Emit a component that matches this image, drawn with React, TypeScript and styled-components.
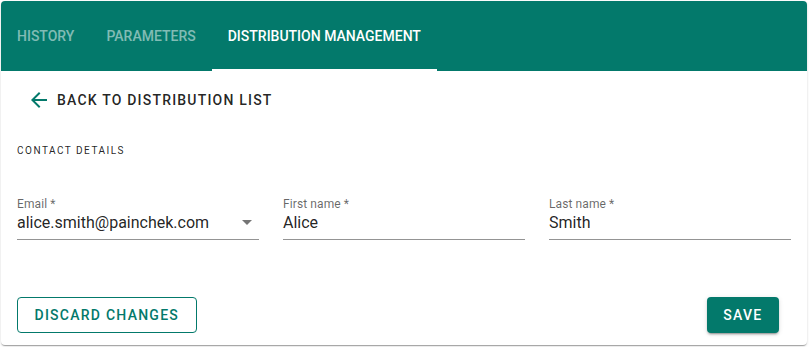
import React from "react";
import styled, { createGlobalStyle } from "styled-components";

const Global = createGlobalStyle`
  html, body { margin: 0; padding: 0; background: #fff; }
  body { font-family: Roboto, "Liberation Sans", Arial, sans-serif; -webkit-font-smoothing: antialiased; }
  * { box-sizing: border-box; }
`;

const Page = styled.div`
  padding: 1px 2px 2px 1px;
  width: 809px;
`;

const Card = styled.div`
  width: 806px;
  height: 344px;
  background: #fff;
  border-radius: 4px;
  overflow: hidden;
  box-shadow: 0px 2px 1px -1px rgba(0,0,0,0.2), 0px 1px 1px 0px rgba(0,0,0,0.14), 0px 1px 3px 0px rgba(0,0,0,0.12);
  display: flex;
  flex-direction: column;
`;

const TabBar = styled.div`
  height: 70px;
  background: #03796b;
  display: flex;
  align-items: stretch;
`;

const Tab = styled.div<{ $active?: boolean }>`
  position: relative;
  display: flex;
  align-items: center;
  padding: 0 16px 1px 16px;
  font-size: 14px;
  font-weight: 500;
  letter-spacing: 0;
  text-transform: uppercase;
  color: ${(p) => (p.$active ? "#ffffff" : "rgba(255,255,255,0.5)")};
  &::after {
    content: "";
    position: absolute;
    left: 0;
    right: 0;
    bottom: 0;
    height: 2px;
    background: ${(p) => (p.$active ? "#ffffff" : "transparent")};
  }
`;

const Body = styled.div`
  flex: 1;
  display: flex;
  flex-direction: column;
  padding: 0 16px 12px 16px;
`;

const BackButton = styled.button`
  align-self: flex-start;
  margin-top: 11px;
  margin-left: 2px;
  height: 36px;
  display: flex;
  align-items: center;
  gap: 6px;
  padding: 0 8px;
  border: none;
  background: transparent;
  font-family: inherit;
  font-size: 14px;
  font-weight: 500;
  letter-spacing: 1.2px;
  color: rgba(0,0,0,0.87);
  text-transform: uppercase;
`;

const SectionTitle = styled.div`
  margin-top: 26px;
  font-size: 10px;
  font-weight: 400;
  letter-spacing: 1.5px;
  text-transform: uppercase;
  color: rgba(0,0,0,0.87);
  line-height: 14px;
`;

const FieldRow = styled.div`
  margin-top: 39px;
  display: grid;
  grid-template-columns: repeat(3, 242px);
  column-gap: 24px;
`;

const Field = styled.div`
  display: flex;
  flex-direction: column;
  border-bottom: 1px solid rgba(0,0,0,0.42);
  padding-bottom: 7px;
`;

const Label = styled.div`
  font-size: 12px;
  line-height: 14px;
  color: rgba(0,0,0,0.6);
  letter-spacing: 0.1px;
`;

const ValueRow = styled.div`
  display: flex;
  align-items: center;
  justify-content: space-between;
  margin-top: 2px;
  font-size: 16px;
  line-height: 19px;
  color: rgba(0,0,0,0.87);
  letter-spacing: 0;
`;

const Caret = styled.span`
  width: 0;
  height: 0;
  margin-right: 7px;
  border-left: 5px solid transparent;
  border-right: 5px solid transparent;
  border-top: 5px solid rgba(0,0,0,0.54);
`;

const Actions = styled.div`
  margin-top: auto;
  display: flex;
  justify-content: space-between;
  align-items: center;
  padding-right: 12px;
`;

const OutlinedButton = styled.button`
  height: 36px;
  padding: 0 16.5px;
  border: 1px solid #03796b;
  border-radius: 4px;
  background: #fff;
  color: #03796b;
  font-family: inherit;
  font-size: 14px;
  font-weight: 500;
  letter-spacing: 1.25px;
  text-transform: uppercase;
`;

const ContainedButton = styled.button`
  height: 36px;
  padding: 0 16.5px;
  border: none;
  border-radius: 4px;
  background: #03796b;
  color: #fff;
  font-family: inherit;
  font-size: 14px;
  font-weight: 500;
  letter-spacing: 1.25px;
  text-transform: uppercase;
  box-shadow: 0px 3px 1px -2px rgba(0,0,0,0.2), 0px 2px 2px 0px rgba(0,0,0,0.14), 0px 1px 5px 0px rgba(0,0,0,0.12);
`;

const ArrowIcon = () => (
  <svg width="24" height="24" viewBox="0 0 24 24" fill="#03796b">
    <path d="M20 11H7.83l5.59-5.59L12 4l-8 8 8 8 1.41-1.41L7.83 13H20v-2z" />
  </svg>
);

export default function App() {
  return (
    <>
      <Global />
      <Page>
        <Card>
          <TabBar>
            <Tab>History</Tab>
            <Tab>Parameters</Tab>
            <Tab $active>Distribution Management</Tab>
          </TabBar>
          <Body>
            <BackButton>
              <ArrowIcon />
              Back to distribution list
            </BackButton>
            <SectionTitle>Contact details</SectionTitle>
            <FieldRow>
              <Field>
                <Label>Email *</Label>
                <ValueRow>
                  <span>alice.smith@painchek.com</span>
                  <Caret />
                </ValueRow>
              </Field>
              <Field>
                <Label>First name *</Label>
                <ValueRow>
                  <span>Alice</span>
                </ValueRow>
              </Field>
              <Field>
                <Label>Last name *</Label>
                <ValueRow>
                  <span>Smith</span>
                </ValueRow>
              </Field>
            </FieldRow>
            <Actions>
              <OutlinedButton>Discard changes</OutlinedButton>
              <ContainedButton>Save</ContainedButton>
            </Actions>
          </Body>
        </Card>
      </Page>
    </>
  );
}
